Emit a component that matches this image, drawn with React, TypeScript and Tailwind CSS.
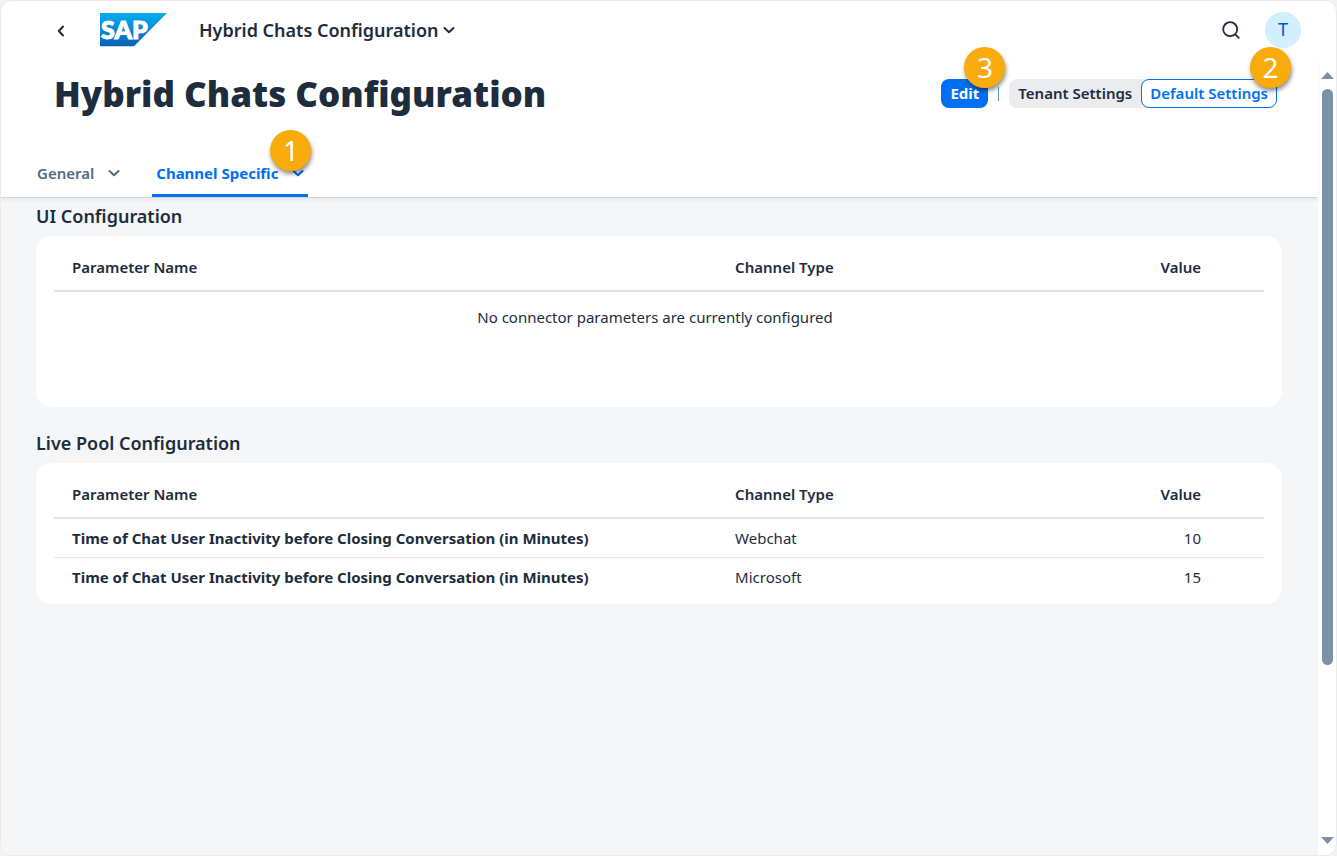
import { ReactNode } from "react";

type Row = { name: string; channel: string; value: number };

const livePoolRows: Row[] = [
  { name: "Time of Chat User Inactivity before Closing Conversation (in Minutes)", channel: "Webchat", value: 10 },
  { name: "Time of Chat User Inactivity before Closing Conversation (in Minutes)", channel: "Microsoft", value: 15 },
];

function Chevron({ className }: { className?: string }) {
  return (
    <svg className={className} width="12" height="8" viewBox="0 0 12 8" fill="none" stroke="currentColor" strokeWidth="2" strokeLinecap="round" strokeLinejoin="round" aria-hidden="true">
      <path d="M1.500 2 6 6.300 10.500 2" />
    </svg>
  );
}

function Logo() {
  return (
    <svg width="68" height="34" viewBox="0 0 68 34" role="img" aria-label="SAP">
      <defs>
        <linearGradient id="logo" x1="0" y1="0" x2="0" y2="1">
          <stop offset="0" stopColor="#00aeef" />
          <stop offset="0.5" stopColor="#0a88d2" />
          <stop offset="1" stopColor="#0a5fb4" />
        </linearGradient>
      </defs>
      <path d="M0 0h67L34 33.300H0z" fill="url(#logo)" />
      <text x="1" y="26" fontFamily="Lato, sans-serif" fontWeight="900" fontSize="25" fill="#fff" stroke="#fff" strokeWidth="1">SAP</text>
    </svg>
  );
}

function Badge({ className, children }: { className: string; children: ReactNode }) {
  return (
    <span className={`pointer-events-none absolute z-10 flex size-[41px] items-center justify-center rounded-full bg-[#f8ab0b] pb-0.5 text-[28px] leading-none font-normal text-white shadow-[1px_3px_4px_rgba(0,0,0,0.45)] ${className}`}>
      {children}
    </span>
  );
}

function ConfigCard({ id, title, rows, className }: { id: string; title: string; rows: Row[]; className: string }) {
  return (
    <section aria-labelledby={id}>
      <h2 id={id} className="pb-0.5 text-lg leading-9 font-semibold">{title}</h2>
      <div className={`rounded-2xl bg-white px-[18px] pt-2 ${className}`}>
        <table className="w-full table-fixed border-collapse text-[15px] leading-6">
          <colgroup>
            <col className="w-[54.8%]" />
            <col className="w-[25%]" />
            <col />
          </colgroup>
          <thead>
            <tr className="h-[47px] border-b-2 border-[#e3e4e5] text-left">
              <th scope="col" className="px-[18px] font-semibold">Parameter Name</th>
              <th scope="col" className="px-[18px] font-semibold">Channel Type</th>
              <th scope="col" className="pr-[63px] text-right font-semibold">Value</th>
            </tr>
          </thead>
          <tbody>
            {rows.length === 0 && (
              <tr>
                <td colSpan={3} className="pt-[13px] pr-2 text-center">No connector parameters are currently configured</td>
              </tr>
            )}
            {rows.map((row) => (
              <tr key={row.channel} className="h-[39px] border-b border-[#e3e4e5] last:border-b-0">
                <th scope="row" className="px-[18px] text-left font-bold">{row.name}</th>
                <td className="px-[18px]">{row.channel}</td>
                <td className="pr-[63px] text-right">{row.value}</td>
              </tr>
            ))}
          </tbody>
        </table>
      </div>
    </section>
  );
}

export default function App() {
  return (
    <div className="min-h-screen bg-[#f3f3f3] font-['Noto_Sans',sans-serif] text-[#1d2d3e]">
      <div className="flex min-h-screen flex-col overflow-hidden rounded-xl border border-[#ebebeb] bg-white">
        <header className="flex h-[58px] items-center pr-[35px] pl-12">
          <button type="button" aria-label="Back" className="flex size-6 items-center justify-center pt-0.5">
            <svg width="8" height="12" viewBox="0 0 8 12" fill="none" stroke="currentColor" strokeWidth="2" strokeLinecap="round" strokeLinejoin="round" aria-hidden="true">
              <path d="M6 1.500 1.800 6 6 10.500" />
            </svg>
          </button>
          <a href="#home" className="ml-[27px]"><Logo /></a>
          <button type="button" className="ml-[31px] flex items-center gap-1 text-lg leading-6 font-semibold">
            Hybrid Chats Configuration
            <Chevron />
          </button>
          <button type="button" aria-label="Search" className="ml-auto flex size-9 items-center justify-center">
            <svg width="18" height="18" viewBox="0 0 18 18" fill="none" stroke="currentColor" strokeWidth="1.8" strokeLinecap="round" aria-hidden="true">
              <circle cx="8.200" cy="8.200" r="7" />
              <path d="m13.300 13.300 3.500 3.500" />
            </svg>
          </button>
          <button type="button" aria-label="Profile T" className="ml-4 size-9 rounded-full bg-[#d1efff] pb-0.5 text-lg leading-none text-[#0057d2]">T</button>
        </header>

        <div className="flex flex-1">
          <div className="flex min-w-0 flex-1 flex-col">
            <div className="relative z-[1] border-b border-[#d4d6d8] bg-white shadow-[0_2px_4px_rgba(34,53,72,0.08)]">
              <div className="flex h-[90px] items-start justify-between pr-[41px] pl-[53px]">
                <h1 className="pt-2.5 text-[35px] leading-[50px] font-black">Hybrid Chats Configuration</h1>
                <div className="flex items-center pt-5 text-[15px] font-semibold">
                  <div className="relative">
                    <button type="button" className="h-[29px] rounded-lg bg-[#0070f2] px-[9px] font-bold text-white">Edit</button>
                    <Badge className="-top-8 left-[23px]">3</Badge>
                  </div>
                  <span className="mx-2.5 h-3.5 w-px bg-[#5b93bd]" />
                  <div className="relative flex rounded-lg bg-[#eaecee]">
                    <button type="button" className="h-[29px] px-[9px]">Tenant Settings</button>
                    <button type="button" aria-pressed="true" className="h-[29px] rounded-lg border border-[#0070f2] bg-white px-2 text-[#0070f2]">Default Settings</button>
                    <Badge className="-top-8 -right-3.5">2</Badge>
                  </div>
                </div>
              </div>
              <nav className="flex h-12 gap-7 pl-8 text-[15px] font-bold">
                <button type="button" className="flex items-center gap-3.5 px-1 font-semibold text-[#556b82]">
                  General
                  <Chevron />
                </button>
                <div className="relative flex border-b-[3px] border-[#0070f2]">
                  <button type="button" className="flex items-center gap-3.5 px-1 pt-[3px] text-[#0070f2]">
                    Channel Specific
                    <Chevron />
                  </button>
                  <Badge className="-top-[19px] -right-[3px]">1</Badge>
                </div>
              </nav>
            </div>
            <main className="flex flex-1 flex-col gap-[18px] bg-[#f5f6f7] pr-9 pb-9 pl-[35px]">
              <ConfigCard id="ui-configuration" title="UI Configuration" rows={[]} className="min-h-[171px]" />
              <ConfigCard id="live-pool-configuration" title="Live Pool Configuration" rows={livePoolRows} className="pb-2" />
            </main>
          </div>
          <div aria-hidden="true" className="flex w-[18px] flex-col items-center pt-[13px] pb-[11px] text-[#7b91a8]">
            <svg width="13" height="7" viewBox="0 0 13 7" fill="currentColor"><path d="M0 7 6.500 0 13 7z" /></svg>
            <div className="my-2.5 flex w-[11px] flex-1 flex-col">
              <div className="h-[78%] w-full rounded-full bg-[#7b91a8]" />
            </div>
            <svg width="13" height="7" viewBox="0 0 13 7" fill="currentColor"><path d="M0 0h13L6.500 7z" /></svg>
          </div>
        </div>
      </div>
    </div>
  );
}
